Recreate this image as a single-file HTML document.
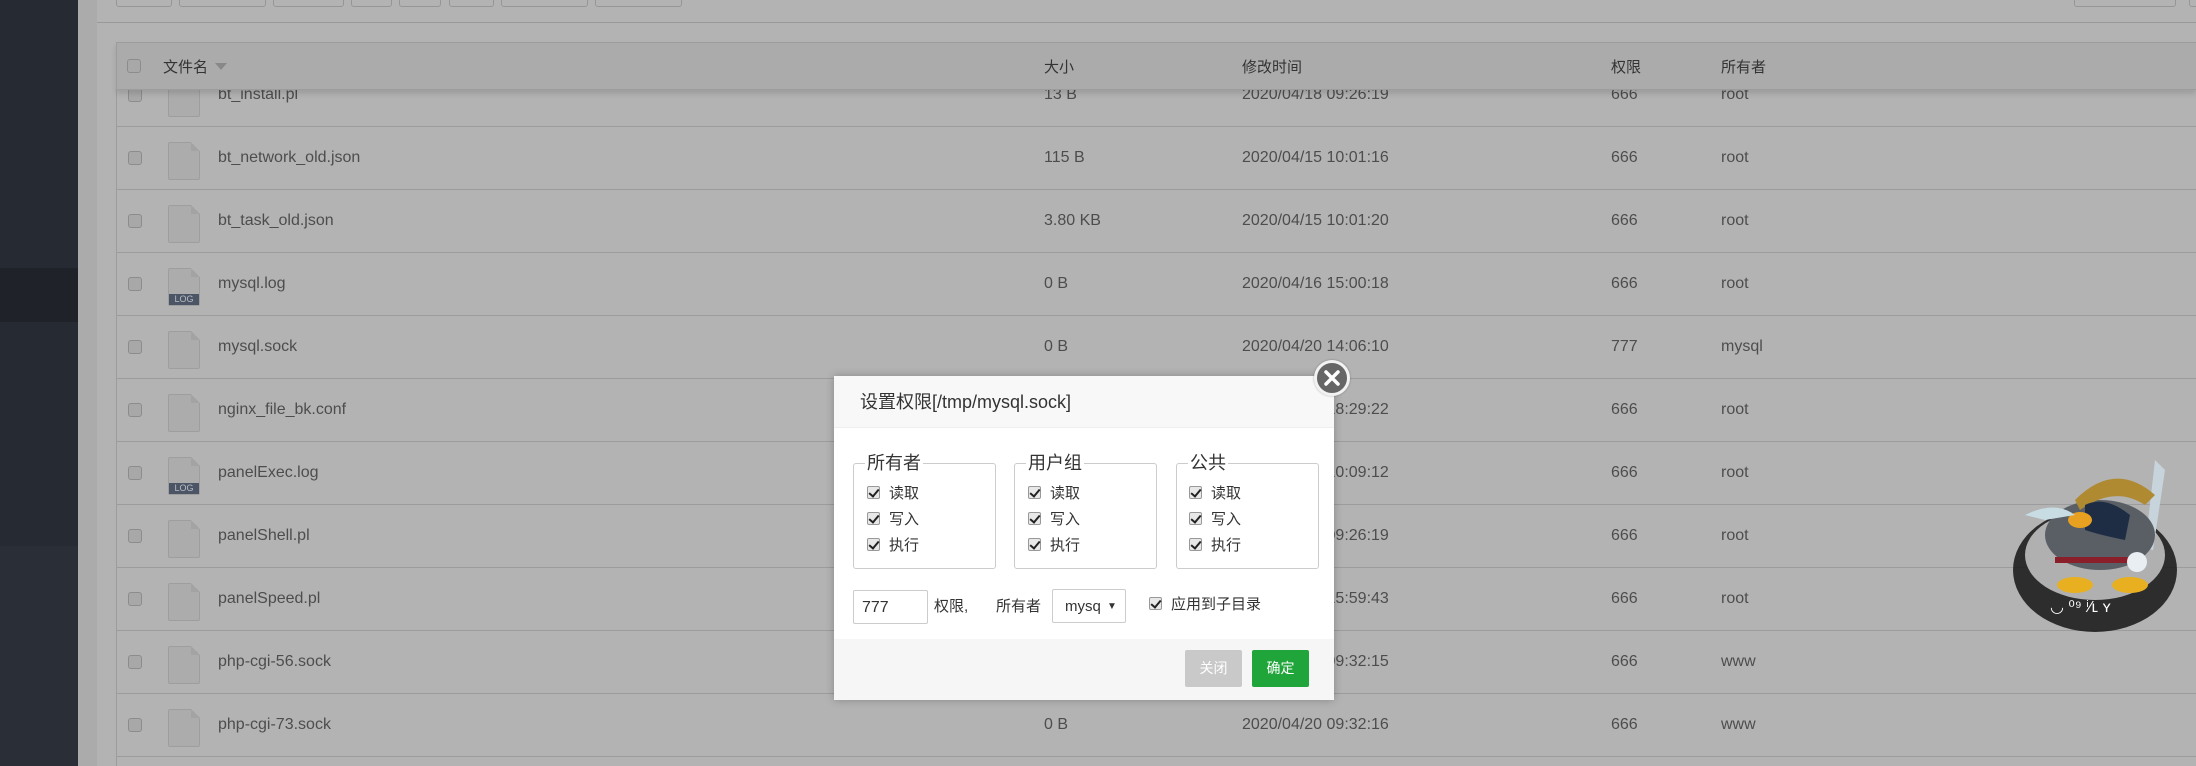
<!DOCTYPE html>
<html style="overflow:hidden;width:2196px;height:766px"><head><meta charset="utf-8"><style>
*{margin:0;padding:0;box-sizing:border-box}
body{width:2196px;height:766px;overflow:hidden;background:#b3b3b3;font-family:"Liberation Sans","Noto Sans CJK SC",sans-serif;position:relative;color:#4a4a4a}
.a{position:absolute}
.tb{position:absolute;top:-4px;height:11px;border:1px solid #969696;border-radius:3px;background:#b3b3b3}
.row{position:absolute;left:116px;right:0;height:63px;border-top:1px solid #9c9c9c;border-left:1px solid #9c9c9c;font-size:16px;color:#4d4d4d}
.row span{position:absolute;top:50%;transform:translateY(-50%);white-space:nowrap}
.cb{position:absolute;left:11px;top:50%;margin-top:-7px;width:14px;height:14px;border:1px solid #8c8c8c;border-radius:3px;background:#a8a8a8}
.fi{position:absolute;left:51px;top:50%;margin-top:-16px;width:32px;height:38px;background:#acacac;border:1px solid #9e9e9e;border-radius:2px}
.fi i{position:absolute;right:-1px;top:-1px;width:9px;height:9px;background:linear-gradient(45deg,#a3a3a3 50%,#b3b3b3 50%)}
.fi b{position:absolute;left:0;right:0;bottom:0;height:11px;background:#4b5566;color:#b8bcc4;font-size:9px;font-weight:normal;text-align:center;line-height:11px}
.dlg{position:absolute;left:834px;top:376px;width:500px;height:324px;background:#fff;box-shadow:0 0 8px rgba(0,0,0,.25)}
fieldset{position:absolute;top:78px;width:143px;height:115px;border:1px solid #ccc;border-radius:3px}
legend{font-size:18px;color:#333;margin-left:11px;padding:0 2px;line-height:18px}
.ck{position:absolute;width:13px;height:13px;border:1px solid #999;border-radius:2px;background:#e8e8e8}
.ck:after{content:"";position:absolute;left:3px;top:0px;width:4px;height:8px;border:solid #222;border-width:0 2px 2px 0;transform:rotate(40deg)}
.lb{position:absolute;font-size:15px;color:#333;line-height:15px}
</style></head><body>
<div class="a" style="left:0;top:0;width:78px;height:766px;background:#252a33"></div>
<div class="a" style="left:0;top:268px;width:78px;height:54px;background:#1f2329"></div>
<div class="a" style="left:0;top:546px;width:78px;height:220px;background:#2a2e37"></div>
<div class="a" style="left:78px;top:0;width:19px;height:766px;background:#ababab"></div>

<div class="tb" style="left:116px;width:56px"></div>
<div class="tb" style="left:179px;width:87px"></div>
<div class="tb" style="left:273px;width:71px"></div>
<div class="tb" style="left:351px;width:41px"></div>
<div class="tb" style="left:399px;width:42px"></div>
<div class="tb" style="left:449px;width:45px"></div>
<div class="tb" style="left:501px;width:87px"></div>
<div class="tb" style="left:595px;width:87px"></div>
<div class="tb" style="left:2074px;width:102px"></div>
<div class="tb" style="left:2189px;width:30px"></div>
<div class="a" style="left:97px;right:0;top:22px;height:1px;background:#999"></div>

<div class="row" style="top:63px"><div class="cb"></div><div class="fi"><i></i></div><span style="left:101px">bt_install.pl</span><span style="left:927px">13 B</span><span style="left:1125px">2020/04/18 09:26:19</span><span style="left:1494px">666</span><span style="left:1604px">root</span></div>
<div class="row" style="top:126px"><div class="cb"></div><div class="fi"><i></i></div><span style="left:101px">bt_network_old.json</span><span style="left:927px">115 B</span><span style="left:1125px">2020/04/15 10:01:16</span><span style="left:1494px">666</span><span style="left:1604px">root</span></div>
<div class="row" style="top:189px"><div class="cb"></div><div class="fi"><i></i></div><span style="left:101px">bt_task_old.json</span><span style="left:927px">3.80 KB</span><span style="left:1125px">2020/04/15 10:01:20</span><span style="left:1494px">666</span><span style="left:1604px">root</span></div>
<div class="row" style="top:252px"><div class="cb"></div><div class="fi"><i></i><b>LOG</b></div><span style="left:101px">mysql.log</span><span style="left:927px">0 B</span><span style="left:1125px">2020/04/16 15:00:18</span><span style="left:1494px">666</span><span style="left:1604px">root</span></div>
<div class="row" style="top:315px"><div class="cb"></div><div class="fi"><i></i></div><span style="left:101px">mysql.sock</span><span style="left:927px">0 B</span><span style="left:1125px">2020/04/20 14:06:10</span><span style="left:1494px">777</span><span style="left:1604px">mysql</span></div>
<div class="row" style="top:378px"><div class="cb"></div><div class="fi"><i></i></div><span style="left:101px">nginx_file_bk.conf</span><span style="left:927px">0 B</span><span style="left:1125px">2020/04/18 18:29:22</span><span style="left:1494px">666</span><span style="left:1604px">root</span></div>
<div class="row" style="top:441px"><div class="cb"></div><div class="fi"><i></i><b>LOG</b></div><span style="left:101px">panelExec.log</span><span style="left:927px">0 B</span><span style="left:1125px">2020/04/20 10:09:12</span><span style="left:1494px">666</span><span style="left:1604px">root</span></div>
<div class="row" style="top:504px"><div class="cb"></div><div class="fi"><i></i></div><span style="left:101px">panelShell.pl</span><span style="left:927px">0 B</span><span style="left:1125px">2020/04/18 09:26:19</span><span style="left:1494px">666</span><span style="left:1604px">root</span></div>
<div class="row" style="top:567px"><div class="cb"></div><div class="fi"><i></i></div><span style="left:101px">panelSpeed.pl</span><span style="left:927px">0 B</span><span style="left:1125px">2020/04/18 15:59:43</span><span style="left:1494px">666</span><span style="left:1604px">root</span></div>
<div class="row" style="top:630px"><div class="cb"></div><div class="fi"><i></i></div><span style="left:101px">php-cgi-56.sock</span><span style="left:927px">0 B</span><span style="left:1125px">2020/04/20 09:32:15</span><span style="left:1494px">666</span><span style="left:1604px">www</span></div>
<div class="row" style="top:693px"><div class="cb"></div><div class="fi"><i></i></div><span style="left:101px">php-cgi-73.sock</span><span style="left:927px">0 B</span><span style="left:1125px">2020/04/20 09:32:16</span><span style="left:1494px">666</span><span style="left:1604px">www</span></div>
<div class="row" style="top:756px;height:10px"></div>

<div class="a" style="left:116px;right:0;top:42px;height:48px;background:#ababab;border:1px solid #9c9c9c;border-right:0;box-shadow:0 4px 5px rgba(0,0,0,.12);font-size:15px;color:#333">
<div class="cb" style="left:10px"></div>
<span class="a" style="left:46px;top:13px">文件名</span>
<span class="a" style="left:98px;top:20px;border:6px solid transparent;border-top:7px solid #888;width:0;height:0"></span>
<span class="a" style="left:927px;top:13px">大小</span>
<span class="a" style="left:1125px;top:13px">修改时间</span>
<span class="a" style="left:1494px;top:13px">权限</span>
<span class="a" style="left:1604px;top:13px">所有者</span>
</div>

<svg class="a" style="left:2005px;top:460px" width="185" height="175" viewBox="0 0 185 175">
<ellipse cx="90" cy="110" rx="82" ry="62" fill="#151515" opacity=".85"/>
<ellipse cx="90" cy="95" rx="70" ry="45" fill="#b0b0b0"/>
<polygon points="150,0 160,10 148,90 140,88" fill="#c8d4dc"/>
<ellipse cx="95" cy="75" rx="55" ry="35" fill="#5a5f66"/>
<path d="M70 40 Q110 0 150 35 L140 45 Q110 25 75 50Z" fill="#b08a30"/>
<path d="M80 45 Q100 35 125 55 L120 80 Q95 75 80 70Z" fill="#1f2d44"/>
<ellipse cx="75" cy="60" rx="12" ry="8" fill="#e8a020"/>
<path d="M20 55 Q50 40 70 55 L40 60Z" fill="#c8dce4"/>
<path d="M50 100 L130 100" stroke="#8a1f2a" stroke-width="6"/>
<circle cx="132" cy="102" r="10" fill="#e8eef2"/>
<ellipse cx="70" cy="125" rx="18" ry="8" fill="#e8b020"/>
<ellipse cx="125" cy="125" rx="18" ry="8" fill="#e8b020"/>
<text x="45" y="152" fill="#fff" font-size="16" font-family="Liberation Sans">◡ ⁰⁹ ⁱ⁄ʟ ʏ</text>
</svg>

<div class="dlg">
<div class="a" style="left:0;top:0;width:500px;height:52px;background:#f8f8f8;border-bottom:1px solid #eee"></div>
<div class="a" style="left:26px;top:15px;font-size:18px;color:#333;line-height:22px;white-space:nowrap">设置权限[/tmp/mysql.sock]</div>
<fieldset style="left:19px"><legend>所有者</legend></fieldset>
<fieldset style="left:180px"><legend>用户组</legend></fieldset>
<fieldset style="left:342px"><legend>公共</legend></fieldset>
<div class="ck" style="left:33px;top:110px"></div><div class="lb" style="left:55px;top:110px">读取</div>
<div class="ck" style="left:33px;top:136px"></div><div class="lb" style="left:55px;top:136px">写入</div>
<div class="ck" style="left:33px;top:162px"></div><div class="lb" style="left:55px;top:162px">执行</div>
<div class="ck" style="left:194px;top:110px"></div><div class="lb" style="left:216px;top:110px">读取</div>
<div class="ck" style="left:194px;top:136px"></div><div class="lb" style="left:216px;top:136px">写入</div>
<div class="ck" style="left:194px;top:162px"></div><div class="lb" style="left:216px;top:162px">执行</div>
<div class="ck" style="left:355px;top:110px"></div><div class="lb" style="left:377px;top:110px">读取</div>
<div class="ck" style="left:355px;top:136px"></div><div class="lb" style="left:377px;top:136px">写入</div>
<div class="ck" style="left:355px;top:162px"></div><div class="lb" style="left:377px;top:162px">执行</div>
<div class="a" style="left:19px;top:214px;width:75px;height:34px;border:1px solid #ccc;border-radius:2px;font-size:16px;color:#333;padding:8px 0 0 8px">777</div>
<div class="lb" style="left:100px;top:223px">权限,</div>
<div class="lb" style="left:162px;top:223px">所有者</div>
<div class="a" style="left:218px;top:213px;width:74px;height:34px;border:1px solid #ccc;border-radius:2px;font-size:15px;color:#333;padding:8px 0 0 12px">mysq <span style="font-size:10px;position:relative;top:-2px;left:2px">▼</span></div>
<div class="ck" style="left:315px;top:221px"></div><div class="lb" style="left:337px;top:221px">应用到子目录</div>
<div class="a" style="left:0;top:263px;width:500px;height:61px;background:#f6f6f6"></div>
<div class="a" style="left:351px;top:274px;width:57px;height:37px;background:#c9c9c9;border-radius:2px;color:#fff;font-size:14px;text-align:center;line-height:37px">关闭</div>
<div class="a" style="left:418px;top:274px;width:57px;height:37px;background:#20a53a;border-radius:2px;color:#fff;font-size:14px;text-align:center;line-height:37px">确定</div>
</div>
<div class="a" style="left:1314px;top:360px;width:36px;height:36px;border-radius:50%;background:#666;border:3px solid #f2f2f2;box-shadow:0 0 2px rgba(0,0,0,.3)">
<svg width="30" height="30" viewBox="0 0 30 30"><path d="M9 9L21 21M21 9L9 21" stroke="#fff" stroke-width="3.5" stroke-linecap="round"/></svg>
</div>
</body></html>
